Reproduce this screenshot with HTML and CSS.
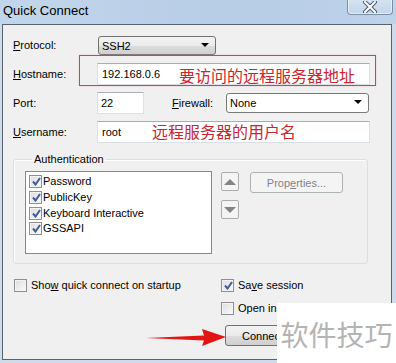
FILE: index.html
```html
<!DOCTYPE html>
<html>
<head>
<meta charset="utf-8">
<link rel="stylesheet" href="styles.css">
</head>
<body>
<div class="titlebar">
  <span class="title">Quick Connect</span>
  <div class="close">
    <svg width="14" height="12" viewBox="0 0 14 12"><path d="M2 1 L12 11 M12 1 L2 11" stroke="#4b5a6e" stroke-width="4" stroke-linecap="round"/><path d="M2 1 L12 11 M12 1 L2 11" stroke="#ffffff" stroke-width="2" stroke-linecap="round"/></svg>
  </div>
</div>
<div class="dialog">
  <div class="form">
    <span class="lbl"><u>P</u>rotocol:</span>
    <div class="select proto">SSH2<span class="caret"></span></div>
    <span class="lbl"><u>H</u>ostname:</span>
    <div class="input wide">192.168.0.6</div>
    <span class="lbl">Port:</span>
    <div class="port-row">
      <div class="input port">22</div>
      <span class="lbl fwl"><u>F</u>irewall:</span>
      <div class="select fw">None<span class="caret"></span></div>
    </div>
    <span class="lbl"><u>U</u>sername:</span>
    <div class="input wide">root</div>
  </div>
  <fieldset class="group">
    <legend>Authentication</legend>
    <div class="group-body">
      <div class="list">
        <div class="item"><span class="cb on"></span><span>Password</span></div>
        <div class="item"><span class="cb on"></span><span>PublicKey</span></div>
        <div class="item"><span class="cb on"></span><span>Keyboard Interactive</span></div>
        <div class="item"><span class="cb on"></span><span>GSSAPI</span></div>
      </div>
      <div class="arrows">
        <div class="sbtn"><span class="tri up"></span></div>
        <div class="sbtn"><span class="tri down"></span></div>
      </div>
      <div class="btn props"><span>Prop<u>e</u>rties...</span></div>
    </div>
  </fieldset>
  <div class="bottom">
    <div class="chk"><span class="cb"></span><span>Sho<u>w</u> quick connect on startup</span></div>
    <div class="right-col">
      <div class="chk"><span class="cb on"></span><span>Sa<u>v</u>e session</span></div>
      <div class="chk"><span class="cb"></span><span>Open in a tab</span></div>
      <div class="btn connect"><span>Connect</span></div>
    </div>
  </div>
</div>
<div class="redbox"></div>
<div class="note note1">要访问的远程服务器地址</div>
<div class="note note2">远程服务器的用户名</div>
<svg class="arrow" width="82" height="22" viewBox="0 0 82 22"><polygon points="0,11 58,8.5 56,2 80,10 56,19 58,13.5" fill="#e21515"/></svg>
<div class="watermark">软件技巧</div>
</body>
</html>
```

FILE: styles.css
```css
* { box-sizing: border-box; }
html, body { margin: 0; padding: 0; }
body {
  width: 396px;
  height: 363px;
  overflow: hidden;
  position: relative;
  background: #cddbeb;
  font: 11px "Liberation Sans", Arial, sans-serif;
  color: #000;
}
u { text-decoration: underline; }

.titlebar {
  height: 24px;
  background: linear-gradient(90deg, #c2d6eb, #b7cde6 60%, #bed3ea);
  display: flex;
  justify-content: space-between;
  align-items: flex-start;
  padding-left: 3px;
  padding-right: 3px;
}
.title {
  font-size: 13px;
  line-height: 13px;
  margin-top: 4px;
  color: #000;
}
.close {
  width: 46px;
  height: 16px;
  margin-top: -1px;
  border: 1px solid #7d8ea6;
  border-top: none;
  border-radius: 0 0 4px 4px;
  background: linear-gradient(#d6e3f1, #c3d5ea);
  display: flex;
  align-items: center;
  justify-content: center;
  box-shadow: inset 0 0 0 1px rgba(255,255,255,0.5);
}

.dialog {
  margin-left: 2px;
  width: 390px;
  height: 336px;
  background: #f0f0f0;
  border: 1px solid #58626f;
  padding: 9px 0 0 10px;
}

.form {
  display: grid;
  grid-template-columns: 84px auto;
  grid-auto-rows: 22px;
  row-gap: 7px;
  align-items: center;
}
.lbl { white-space: nowrap; }

.input {
  height: 22px;
  background: #fff;
  border: 1px solid #dbdfe6;
  border-top-color: #abadb3;
  padding: 3px 0 0 4px;
  line-height: 14px;
}
.input.wide { width: 273px; }
.input.port { width: 47px; padding-left: 3px; }

.select {
  position: relative;
  height: 19px;
  border: 1px solid #707070;
  border-radius: 3px;
  background: linear-gradient(#f3f3f3, #ebebeb 50%, #dddddd 51%, #cfcfcf);
  padding: 2px 0 0 3px;
  line-height: 14px;
}
.select.proto { width: 118px; margin-left: 1px; }
.select.fw { width: 143px; background: #fff; border-color: #7a7a7a; height: 20px; }
.caret {
  position: absolute;
  right: 6px;
  top: 6px;
  width: 0;
  height: 0;
  border-left: 4px solid transparent;
  border-right: 4px solid transparent;
  border-top: 4px solid #000;
}

.port-row {
  display: flex;
  align-items: center;
}
.fwl { margin-left: 28px; width: 54px; }

.group {
  margin: 10px 0 0 0;
  width: 355px;
  height: 111px;
  border: 1px solid #d5dfe5;
  border-radius: 3px;
  padding: 0 0 0 11px;
  box-shadow: inset 1px 1px 0 #fff;
}
.group legend {
  padding: 0 2px;
  margin-left: 7px;
  line-height: 13px;
}
.group-body {
  display: flex;
  align-items: flex-start;
  margin-top: 5px;
}
.list {
  width: 187px;
  height: 83px;
  background: #fff;
  border: 1px solid #828790;
  padding: 2px 0 0 3px;
}
.item {
  height: 15.7px;
  display: flex;
  align-items: center;
  line-height: 13px;
}
.cb {
  width: 13px;
  height: 13px;
  border: 1px solid #8f8f8f;
  background: linear-gradient(135deg, #dcdcdc, #fbfbfb);
  box-shadow: inset 0 0 0 1px #f4f4f4;
  margin-right: 2px;
  flex: none;
  position: relative;
}
.list .cb { margin-right: 1px; }
.cb.on::after {
  content: "";
  position: absolute;
  left: 2px;
  top: 1px;
  width: 9px;
  height: 9px;
  background: no-repeat center/9px 9px url("data:image/svg+xml,%3Csvg xmlns='http://www.w3.org/2000/svg' viewBox='0 0 9 9'%3E%3Cpath d='M1 4.5 L3.5 7.5 L8 1' fill='none' stroke='%23405c9a' stroke-width='2'/%3E%3C/svg%3E");
}

.arrows {
  display: flex;
  flex-direction: column;
  gap: 9px;
  margin-left: 9px;
  margin-top: 1px;
}
.sbtn {
  width: 18px;
  height: 19px;
  border: 1px solid #acacac;
  border-radius: 2px;
  background: #f4f4f4;
  display: flex;
  align-items: center;
  justify-content: center;
}
.tri {
  width: 0; height: 0;
  border-left: 6px solid transparent;
  border-right: 6px solid transparent;
}
.tri.up { border-bottom: 6px solid #838383; }
.tri.down { border-top: 6px solid #838383; }

.btn {
  height: 21px;
  border: 1px solid #adb2b5;
  border-radius: 3px;
  background: #f4f4f4;
  color: #838383;
  display: flex;
  align-items: center;
  justify-content: center;
}
.btn.props {
  width: 93px;
  margin-left: 11px;
  margin-top: 1px;
}
.btn.connect {
  width: 75px;
  color: #000;
  border-color: #707070;
  background: linear-gradient(#f2f2f2, #ebebeb 50%, #dddddd 51%, #cfcfcf);
  margin-left: 4px;
  margin-top: 1px;
}

.bottom {
  display: flex;
  margin-top: 14px;
  margin-left: 1px;
}
.bottom > .chk { width: 207px; align-self: flex-start; }
.right-col {
  display: flex;
  flex-direction: column;
  gap: 9px;
}
.chk {
  display: flex;
  align-items: center;
  height: 14px;
  white-space: nowrap;
}
.chk .cb { margin-right: 4px; }

.redbox {
  position: absolute;
  left: 79px;
  top: 55px;
  width: 297px;
  height: 31px;
  border: 1px solid #d2434a;
  box-shadow: 0 0 1px #e99;
}
.note {
  position: absolute;
  font: 16px "Noto Sans CJK SC", sans-serif;
  line-height: 18px;
  color: #c8262e;
  white-space: nowrap;
}
.note1 { left: 179px; top: 66px; }
.note2 { left: 152px; top: 122px; }
.arrow {
  position: absolute;
  left: 146px;
  top: 327px;
}
.watermark {
  position: absolute;
  left: 277px;
  top: 303px;
  right: 0;
  bottom: 0;
  background: #fff;
  display: flex;
  align-items: center;
  justify-content: center;
  font: 28px "Noto Sans CJK SC", sans-serif;
  color: #b4b4b4;
  padding-top: 1px;
}
```
